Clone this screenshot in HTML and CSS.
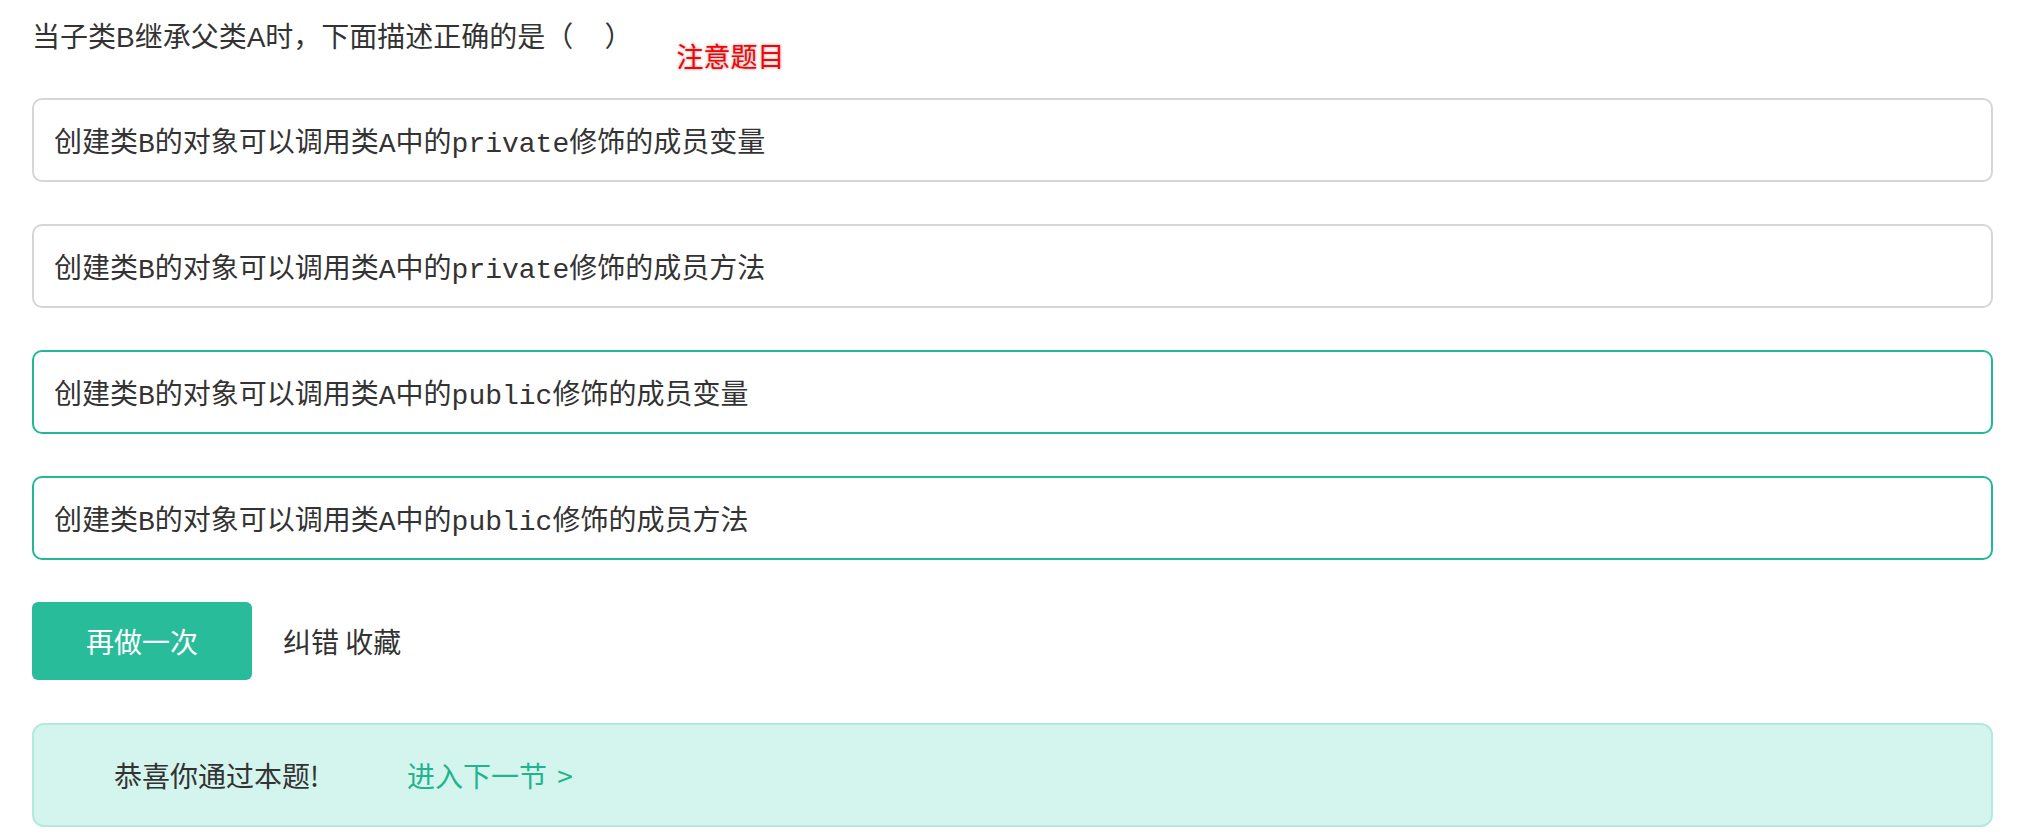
FILE: index.html
```html
<!DOCTYPE html>
<html lang="zh-CN">
<head>
<meta charset="utf-8">
<title>题目</title>
<link rel="stylesheet" href="styles.css">
</head>
<body>
<div class="page">
  <div class="question">
    <div class="question-text">当子类B继承父类A时，下面描述正确的是（&nbsp;&nbsp;&nbsp;&nbsp;）</div>
    <div class="note">注意题目</div>
  </div>
  <div class="options">
    <div class="option">创建类B的对象可以调用类A中的private修饰的成员变量</div>
    <div class="option">创建类B的对象可以调用类A中的private修饰的成员方法</div>
    <div class="option option-selected">创建类B的对象可以调用类A中的public修饰的成员变量</div>
    <div class="option option-selected">创建类B的对象可以调用类A中的public修饰的成员方法</div>
  </div>
  <div class="actions">
    <div class="btn-retry">再做一次</div>
    <div class="action-links">纠错 收藏</div>
  </div>
  <div class="success">
    <span class="success-text">恭喜你通过本题!</span>
    <span class="next-link">进入下一节 &gt;</span>
  </div>
</div>
</body>
</html>
```
FILE: styles.css
```css
html, body {
  margin: 0;
  padding: 0;
  background: #ffffff;
}

.page {
  padding: 18px 35px 0 32px;
  font-family: "Liberation Sans", "Noto Sans CJK SC", sans-serif;
  color: #333333;
  font-size: 28px;
}

.question {
  display: flex;
  align-items: flex-start;
  height: 40px;
  margin-bottom: 40px;
}

.question-text {
  line-height: 40px;
  white-space: nowrap;
}

.note {
  margin-left: 44px;
  margin-top: 22px;
  font-size: 27px;
  line-height: 32px;
  color: #ff0000;
  font-family: "Noto Sans CJK SC", sans-serif;
  text-shadow: 0 0 3px #bdbdbd, 0 0 3px #c8c8c8, 0 0 1px #d0d0d0;
}

.options {
  display: flex;
  flex-direction: column;
  gap: 42px;
}

.option {
  box-sizing: border-box;
  height: 84px;
  border: 2px solid #d6d6d6;
  border-radius: 10px;
  padding: 0 20px;
  display: flex;
  align-items: center;
  font-family: "Liberation Mono", "Noto Sans CJK SC", monospace;
  font-size: 28px;
  color: #333333;
  white-space: nowrap;
}

.option-selected {
  border-color: #1fb899;
}

.actions {
  display: flex;
  align-items: center;
  margin-top: 42px;
}

.btn-retry {
  width: 220px;
  height: 78px;
  border-radius: 6px;
  background: #29bc9b;
  color: #ffffff;
  display: flex;
  align-items: center;
  justify-content: center;
  font-family: "Noto Sans CJK SC", sans-serif;
}

.action-links {
  margin-left: 31px;
  font-family: "Noto Sans CJK SC", sans-serif;
}

.success {
  box-sizing: border-box;
  margin-top: 43px;
  height: 104px;
  border: 2px solid #b3e9de;
  border-radius: 12px;
  background: #d4f4ee;
  padding: 0 80px;
  display: flex;
  align-items: center;
  font-family: "Noto Sans CJK SC", sans-serif;
}

.success-text {
  color: #333333;
}

.next-link {
  margin-left: 88px;
  color: #22b48f;
  word-spacing: 4px;
}
```
